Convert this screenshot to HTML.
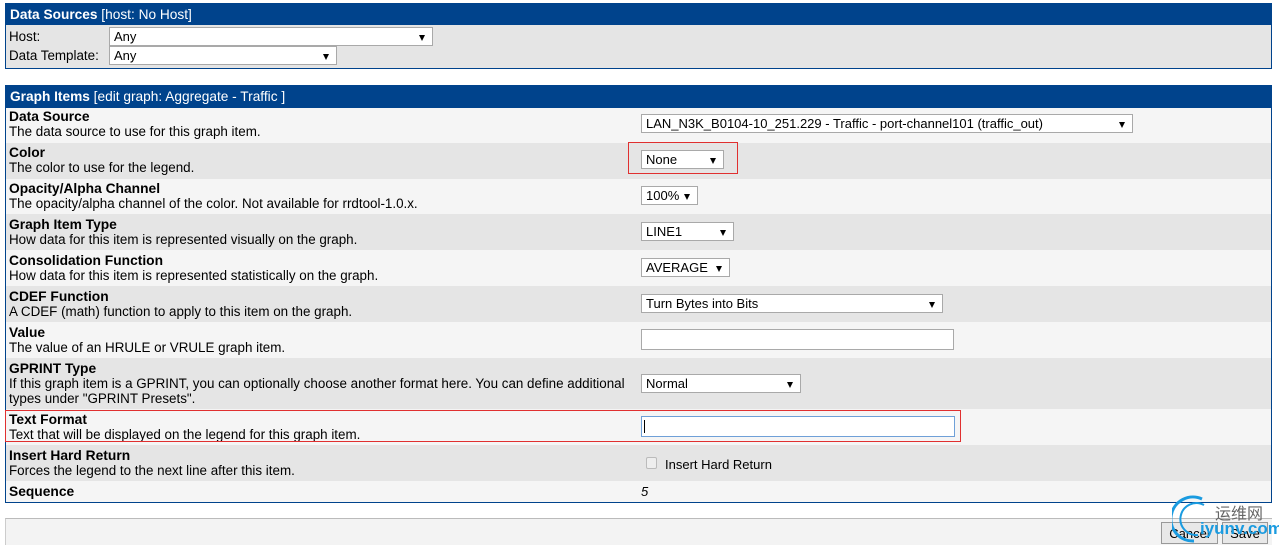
<!DOCTYPE html>
<html><head><meta charset="utf-8"><style>
*{margin:0;padding:0;box-sizing:border-box}
body{width:1279px;height:545px;background:#fff;font-family:"Liberation Sans",Arial,sans-serif;font-size:13.4px;color:#000;position:relative;overflow:hidden}
.a{position:absolute}
.hdr{background:#00438c;color:#fff;font-size:13.7px;padding:3px 0 0 4px}
.hdr b{font-weight:bold}
.row{position:absolute;left:6px;width:1265px}
.l{background:#f5f5f5}.d{background:#e5e5e5}
.t{position:absolute;left:3px;font-weight:bold;font-size:13.8px;white-space:nowrap}
.s{position:absolute;left:3px;font-size:13.4px;white-space:nowrap}
.sel{position:absolute;background:#fff;border:1px solid #a9a9a9;height:19px;font-size:13px;padding:1px 0 0 4px;white-space:nowrap;overflow:hidden}
.sel:after{content:"";position:absolute;right:7px;top:7px;border-left:3.5px solid transparent;border-right:3.5px solid transparent;border-top:6px solid #000}
.inp{position:absolute;background:#fff;border:1px solid #a9a9a9}
.red{position:absolute;border:1px solid #e03030}
</style></head><body>
<div class="a" style="left:5px;top:3px;width:1267px;height:66px;border:1px solid #00438c;background:#e5e5e5">
  <div class="hdr" style="height:21px"><b>Data Sources</b> [host: No Host]</div>
  <div class="a" style="left:3px;top:25px">Host:</div>
  <div class="a" style="left:3px;top:44px">Data Template:</div>
</div>
<div class="sel" style="left:109px;top:27px;width:324px">Any</div>
<div class="sel" style="left:109px;top:46px;width:228px">Any</div>

<div class="a" style="left:5px;top:85px;width:1267px;height:418px;border:1px solid #00438c;background:#f5f5f5">
  <div class="hdr" style="height:22px"><b>Graph Items</b> [edit graph: Aggregate - Traffic ]</div>
</div>
<div class="row l" style="top:108px;height:35px"><div class="t" style="top:1px">Data Source</div><div class="s" style="top:16px">The data source to use for this graph item.</div></div>
<div class="row d" style="top:143px;height:36px"><div class="t" style="top:2px">Color</div><div class="s" style="top:17px">The color to use for the legend.</div></div>
<div class="row l" style="top:179px;height:35px"><div class="t" style="top:2px">Opacity/Alpha Channel</div><div class="s" style="top:17px">The opacity/alpha channel of the color. Not available for rrdtool-1.0.x.</div></div>
<div class="row d" style="top:214px;height:36px"><div class="t" style="top:3px">Graph Item Type</div><div class="s" style="top:18px">How data for this item is represented visually on the graph.</div></div>
<div class="row l" style="top:250px;height:36px"><div class="t" style="top:3px">Consolidation Function</div><div class="s" style="top:18px">How data for this item is represented statistically on the graph.</div></div>
<div class="row d" style="top:286px;height:36px"><div class="t" style="top:3px">CDEF Function</div><div class="s" style="top:18px">A CDEF (math) function to apply to this item on the graph.</div></div>
<div class="row l" style="top:322px;height:36px"><div class="t" style="top:3px">Value</div><div class="s" style="top:18px">The value of an HRULE or VRULE graph item.</div></div>
<div class="row d" style="top:358px;height:51px"><div class="t" style="top:3px">GPRINT Type</div><div class="s" style="top:18px">If this graph item is a GPRINT, you can optionally choose another format here. You can define additional</div><div class="s" style="top:33px">types under "GPRINT Presets".</div></div>
<div class="row l" style="top:409px;height:36px"><div class="t" style="top:3px">Text Format</div><div class="s" style="top:18px">Text that will be displayed on the legend for this graph item.</div></div>
<div class="row d" style="top:445px;height:36px"><div class="t" style="top:3px">Insert Hard Return</div><div class="s" style="top:18px">Forces the legend to the next line after this item.</div></div>
<div class="row l" style="top:481px;height:21px"><div class="t" style="top:3px">Sequence</div></div>

<div class="sel" style="left:641px;top:114px;width:492px">LAN_N3K_B0104-10_251.229 - Traffic - port-channel101 (traffic_out)</div>
<div class="red" style="left:628px;top:142px;width:110px;height:32px"></div>
<div class="sel" style="left:641px;top:150px;width:83px">None</div>
<div class="sel" style="left:641px;top:186px;width:57px">100%</div>
<div class="sel" style="left:641px;top:222px;width:93px">LINE1</div>
<div class="sel" style="left:641px;top:258px;width:89px">AVERAGE</div>
<div class="sel" style="left:641px;top:294px;width:302px">Turn Bytes into Bits</div>
<div class="inp" style="left:641px;top:329px;width:313px;height:21px"></div>
<div class="sel" style="left:641px;top:374px;width:160px">Normal</div>
<div class="red" style="left:5px;top:410px;width:956px;height:32px"></div>
<div class="inp" style="left:641px;top:416px;width:314px;height:21px;border-color:#6fa0d8"><div class="a" style="left:2px;top:3px;width:1px;height:13px;background:#000"></div></div>
<div class="a" style="left:646px;top:457px;width:11px;height:12px;border:1px solid #bbb;border-radius:2px;background:#eee"></div>
<div class="a" style="left:665px;top:457px;font-size:13px">Insert Hard Return</div>
<div class="a" style="left:641px;top:484px;font-style:italic;font-size:13px">5</div>

<div class="a" style="left:5px;top:518px;width:1267px;height:27px;background:#f3f3f3;border-top:1px solid #bbb;border-left:1px solid #ccc"></div>
<div class="a" style="left:1161px;top:522px;width:57px;height:22px;border:1px solid #999;background:#e8e8e8;font-size:13px;text-align:center;padding-top:3px">Cancel</div>
<div class="a" style="left:1222px;top:522px;width:46px;height:22px;border:1px solid #999;background:#e8e8e8;font-size:13px;text-align:center;padding-top:3px">Save</div>
<svg class="a" style="left:1172px;top:495px" width="60" height="50"><path d="M30 4 A22 22 0 1 0 22 46" fill="none" stroke="#1a9be0" stroke-width="3"/><path d="M32 10 A16 16 0 1 0 26 40" fill="none" stroke="#1a9be0" stroke-width="2"/></svg>
<div class="a" style="left:1215px;top:500px;color:#666;font-size:16px;font-family:'Liberation Sans','Noto Sans CJK SC',sans-serif">运维网</div>
<div class="a" style="left:1200px;top:519px;color:#1a9be0;font-size:17px;font-weight:bold">iyunv.com</div>
</body></html>
